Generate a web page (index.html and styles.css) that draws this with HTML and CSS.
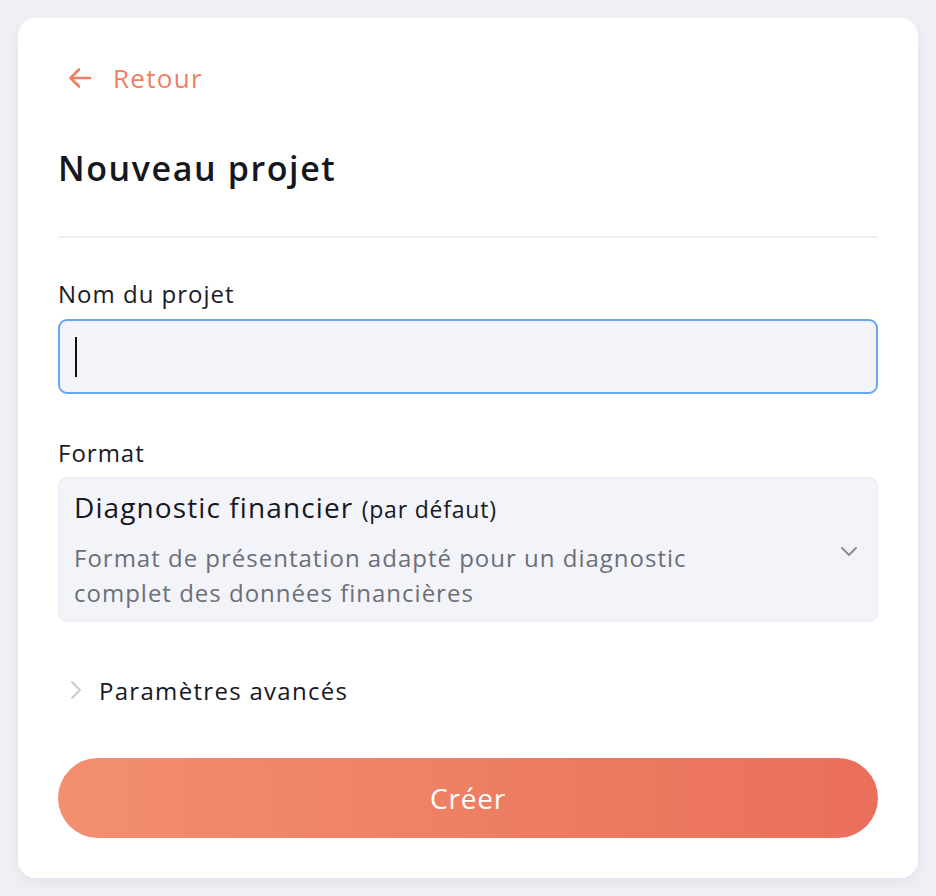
FILE: index.html
```html
<!DOCTYPE html>
<html lang="fr">
<head>
<meta charset="utf-8">
<title>Nouveau projet</title>
<link rel="stylesheet" href="styles.css">
</head>
<body>
<main class="card">
  <a class="back" href="#">
    <svg class="back-icon" width="24" height="24" viewBox="0 0 24 24" fill="none" stroke="currentColor" stroke-width="2.6" stroke-linecap="round" stroke-linejoin="round"><path d="M22 12H3"/><path d="M11 3.5L2.5 12L11 20.5"/></svg>
    <span>Retour</span>
  </a>
  <h1 class="title">Nouveau projet</h1>
  <hr class="divider">
  <label class="label">Nom du projet</label>
  <div class="input"><span class="caret"></span></div>
  <label class="label label-format">Format</label>
  <div class="select">
    <div class="select-text">
      <div class="select-title">Diagnostic financier <span class="select-default">(par défaut)</span></div>
      <div class="select-desc">Format de présentation adapté pour un diagnostic complet des données financières</div>
    </div>
    <svg class="select-chevron" width="18" height="12" viewBox="0 0 18 12" fill="none" stroke="currentColor" stroke-width="2" stroke-linecap="round" stroke-linejoin="round"><path d="M2 3l7 7 7-7"/></svg>
  </div>
  <div class="advanced">
    <svg class="advanced-chevron" width="12" height="20" viewBox="0 0 12 20" fill="none" stroke="currentColor" stroke-width="1.8" stroke-linecap="round" stroke-linejoin="round"><path d="M2 2l8 8-8 8"/></svg>
    <span>Paramètres avancés</span>
  </div>
  <button class="submit" type="button">Créer</button>
</main>
</body>
</html>
```

FILE: styles.css
```css
* { box-sizing: border-box; }
html, body { margin: 0; }
body {
  background: #eff0f5;
  padding: 18px;
  font-family: "Open Sans", "Noto Sans", sans-serif;
  color: #17181f;
}
.card {
  width: 900px;
  height: 860px;
  background: #ffffff;
  border-radius: 18px;
  padding: 40px;
  box-shadow: 0 4px 14px rgba(20, 24, 60, 0.06);
  display: flex;
  flex-direction: column;
}
.back {
  display: flex;
  align-items: center;
  height: 40px;
  padding-left: 10px;
  gap: 21px;
  color: #ef7f62;
  text-decoration: none;
  font-size: 26px;
  line-height: 40px;
  letter-spacing: 1.3px;
}
.back-icon { flex: none; }
.title {
  margin: 48px 0 0;
  font-size: 34px;
  line-height: 44px;
  font-weight: 600;
  color: #16171d;
  letter-spacing: 1.6px;
}
.divider {
  margin: 46px 0 0;
  border: 0;
  height: 2px;
  background: #eeeff3;
}
.label {
  display: block;
  margin-top: 40px;
  font-size: 24px;
  line-height: 32px;
  color: #1a1b22;
  letter-spacing: 1px;
}
.label-format { margin-top: 43px; }
.input {
  margin-top: 9px;
  height: 75px;
  border: 2px solid #69a6f0;
  border-radius: 9px;
  background: #f3f4f9;
  display: flex;
  align-items: center;
  padding-left: 15px;
}
.caret {
  width: 2px;
  height: 40px;
  background: #111216;
}
.select {
  margin-top: 8px;
  height: 145px;
  border: 1px solid #eaecf1;
  border-radius: 9px;
  background: #f3f4f9;
  display: flex;
  align-items: center;
  padding: 0 19px 0 15px;
}
.select-text { flex: 1; }
.select-title {
  font-size: 28px;
  line-height: 36px;
  color: #17181f;
  letter-spacing: 1.1px;
}
.select-default { font-size: 23px; letter-spacing: 0.8px; }
.select-desc {
  margin-top: 13px;
  max-width: 660px;
  font-size: 24px;
  line-height: 35px;
  color: #6c6f77;
  letter-spacing: 1px;
}
.select-chevron { color: #8a8d94; flex: none; margin-top: 2px; }
.advanced {
  margin-top: 50px;
  height: 36px;
  display: flex;
  align-items: center;
  gap: 17px;
  padding-left: 12px;
  font-size: 24px;
  color: #17181f;
  letter-spacing: 1.3px;
}
.advanced-chevron { color: #c6c8ce; flex: none; }
.submit {
  margin-top: 50px;
  height: 80px;
  border: 0;
  border-radius: 40px;
  background: linear-gradient(90deg, #f28f6f 0%, #ee7f63 50%, #ea6f5b 100%);
  color: #ffffff;
  font-family: inherit;
  font-size: 28px;
  font-weight: 500;
  letter-spacing: 0.8px;
}
```
